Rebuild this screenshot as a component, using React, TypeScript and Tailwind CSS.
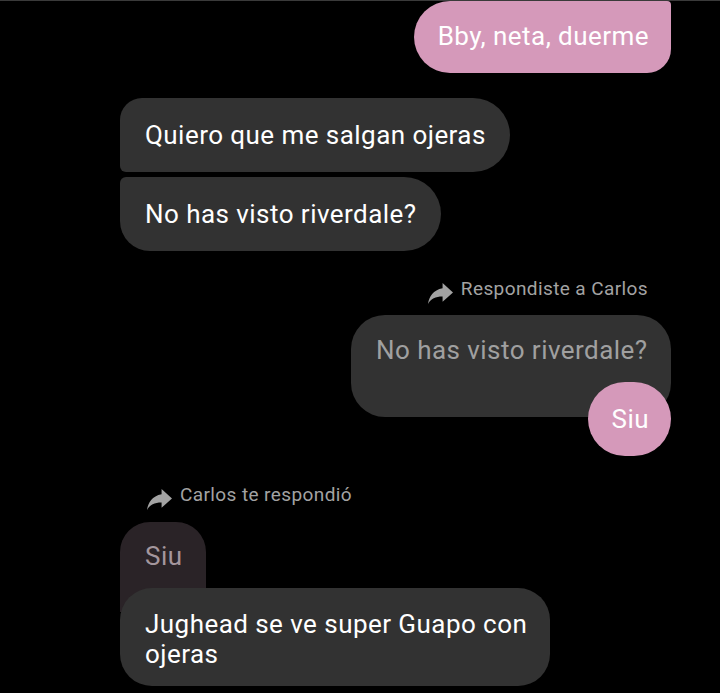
import React from 'react';

function ReplyArrow() {
  return (
    <svg width="25" height="22" viewBox="0 0 24 21" className="shrink-0" fill="#a3a3a3">
      <path d="M14 5V0l10 9-10 9v-5c-7 0-11 2-14 7C1 13.5 5 6.5 14 5z" />
    </svg>
  );
}

export default function App() {
  return (
    <div
      className="w-[720px] h-[693px] overflow-hidden bg-black flex flex-col"
      style={{ fontFamily: 'Roboto, "Noto Sans", sans-serif' }}
    >
      <div className="h-px w-full bg-[#3a3a3a] shrink-0" />

      {/* my message */}
      <div className="flex justify-end pr-[49px]">
        <div className="bg-[#d599ba] text-white text-[26px] tracking-[0.45px] leading-[30px] pl-[24px] pr-[22px] pt-[20px] pb-[22px] rounded-l-[36px] rounded-tr-[4px] rounded-br-[24px]">
          Bby, neta, duerme
        </div>
      </div>

      {/* their messages */}
      <div className="flex flex-col items-start pl-[120px] mt-[25px] gap-[5px]">
        <div className="bg-[#323232] text-white text-[26px] tracking-[0.45px] leading-[30px] pl-[25px] pr-[24px] py-[22px] rounded-r-[37px] rounded-tl-[22px] rounded-bl-[6px]">
          Quiero que me salgan ojeras
        </div>
        <div className="bg-[#323232] text-white text-[26px] tracking-[0.45px] leading-[30px] pl-[25px] pr-[24px] py-[22px] rounded-r-[37px] rounded-tl-[6px] rounded-bl-[30px]">
          No has visto riverdale?
        </div>
      </div>

      {/* my reply */}
      <div className="flex flex-col items-end pr-[49px] mt-[26px]">
        <div className="flex items-start gap-[8px] mr-[23px]">
          <div className="mt-[6px]">
            <ReplyArrow />
          </div>
          <span className="text-[19px] tracking-[0.4px] leading-[24px] text-[#a3a3a3]">Respondiste a Carlos</span>
        </div>
        <div className="mt-[10px] w-[320px] h-[102px] bg-[#323232] rounded-[34px] pl-[25px] pt-[20px] text-[26px] tracking-[0.45px] leading-[30px] text-[#a0a0a0]">
          No has visto riverdale?
        </div>
        <div className="relative -mt-[35px] bg-[#d599ba] text-white text-[26px] tracking-[0.45px] leading-[30px] pl-[24px] pr-[22px] py-[22px] rounded-[37px]">
          Siu
        </div>
      </div>

      {/* their reply */}
      <div className="flex flex-col items-start pl-[120px] mt-[27px]">
        <div className="flex items-start gap-[8px] ml-[27px]">
          <div className="mt-[6px]">
            <ReplyArrow />
          </div>
          <span className="text-[19px] tracking-[0.4px] leading-[24px] text-[#a3a3a3]">Carlos te respondió</span>
        </div>
        <div className="mt-[11px] w-[86px] h-[90px] bg-[#2a2327] rounded-t-[30px] pl-[25px] pt-[19px] text-[26px] tracking-[0.45px] leading-[30px] text-[#a4969d]">
          Siu
        </div>
        <div className="relative -mt-[24px] w-[430px] bg-[#323232] text-white text-[26px] tracking-[0.45px] leading-[30px] pl-[25px] pr-[12px] pt-[21px] pb-[17px] rounded-[32px]">
          Jughead se ve super Guapo con ojeras
        </div>
      </div>
    </div>
  );
}
